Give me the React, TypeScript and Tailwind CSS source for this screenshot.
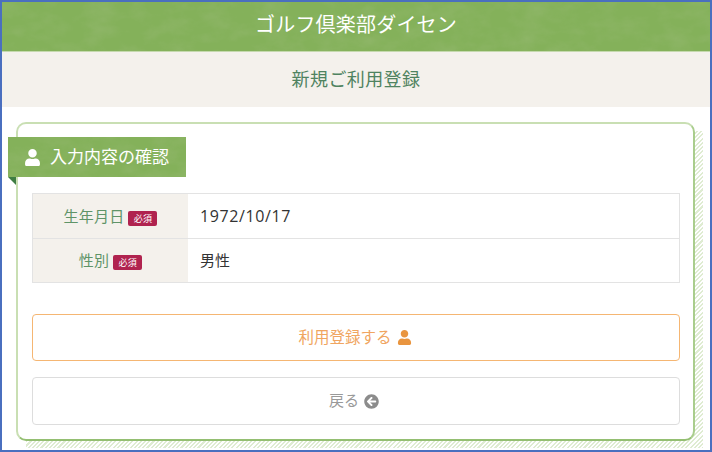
import { FaUser, FaArrowCircleLeft } from "react-icons/fa";

function Texture({ id, seed }: { id: string; seed: number }) {
  return (
    <svg className="absolute inset-0 h-full w-full" aria-hidden="true">
      <filter id={id}>
        <feTurbulence type="fractalNoise" baseFrequency="0.035 0.06" numOctaves={4} seed={seed} />
        <feColorMatrix values="0 0 0 0 0.36  0 0 0 0 0.52  0 0 0 0 0.22  1.6 0 0 0 -0.62" />
      </filter>
      <rect width="100%" height="100%" filter={`url(#${id})`} opacity="0.4" />
    </svg>
  );
}

function Badge() {
  return (
    <span className="mt-[4px] inline-flex h-[15px] w-[29px] items-center justify-center rounded-[2px] bg-[#b0234f] text-[9px] leading-none text-white">
      必須
    </span>
  );
}

function Row({ label, value, last, wide }: { label: string; value: string; last?: boolean; wide?: boolean }) {
  return (
    <div className={`flex ${last ? "h-[43px]" : "h-[45px] border-b border-[#e3e3e3]"}`}>
      <div className="flex w-[155px] items-center justify-center gap-[4px] bg-[#f4f1ec] text-[15px] tracking-[0.2px] text-[#5f9468]">
        <span>{label}</span>
        <Badge />
      </div>
      <div className={`flex flex-1 items-center pl-3 text-[#333333] ${wide ? "text-[16px] tracking-[0.6px]" : "text-[15px]"}`}>
        {value}
      </div>
    </div>
  );
}

export default function App() {
  return (
    <div
      className="flex h-[452px] w-[712px] flex-col overflow-hidden border-2 border-[#4a6fbf] bg-white"
      style={{ fontFamily: '"Open Sans", "Noto Sans CJK JP", sans-serif' }}
    >
      <header className="relative flex h-[50px] shrink-0 items-center justify-center overflow-hidden border-b border-[#c5d9ae] bg-[#84b15a] pb-[3px]">
        <Texture id="tex-a" seed={4} />
        <h1 className="relative text-[20px] font-normal tracking-[0.2px] text-white">ゴルフ倶楽部ダイセン</h1>
      </header>
      <div className="flex h-[55px] shrink-0 items-center justify-center bg-[#f4f1ec] text-[18px] tracking-[0.4px] text-[#4f8360]">
        新規ご利用登録
      </div>

      <main className="relative ml-[14px] mt-[15px] h-[319px] w-[679px]">
        <div className="absolute left-[10px] top-[9px] h-[317px] w-[677px] bg-[repeating-linear-gradient(135deg,#dfecd2_0px,#dfecd2_1.5px,#ffffff_1.5px,#ffffff_3px)]" />
        <section className="relative h-full rounded-[10px] border-2 border-[#c9dfb3] border-b-[#94bf72] border-r-[#a9cd8c] bg-white pl-[14px] pr-[13px]">
          <div className="absolute left-[-10px] top-[13px] z-10">
            <div className="relative flex h-[40px] w-[178px] items-center gap-[9px] overflow-hidden bg-[#84b15a] pl-[16px] text-[17px] text-white">
              <Texture id="tex-b" seed={9} />
              <FaUser className="relative h-[17px] w-[17px] shrink-0" />
              <span className="relative whitespace-nowrap">入力内容の確認</span>
            </div>
            <div className="h-0 w-0 border-l-[8px] border-t-[8px] border-l-transparent border-t-[#3f7d43]" />
          </div>

          <div className="mt-[69px] border border-[#e3e3e3] bg-white">
            <Row label="生年月日" value="1972/10/17" wide />
            <Row label="性別" value="男性" last />
          </div>

          <button className="mt-[31px] flex h-[47px] w-full items-center justify-center gap-[5px] rounded-[4px] border border-[#f5b673] bg-white pr-[2px] text-[15.5px] text-[#f0a560]">
            <span>利用登録する</span>
            <FaUser className="h-[15px] w-[15px] text-[#e9953f]" />
          </button>
          <button className="mt-[16px] flex h-[48px] w-full items-center justify-center gap-[5px] rounded-[4px] border border-[#dddddd] bg-white pb-[2px] pr-[4px] text-[15px] text-[#999999]">
            <span>戻る</span>
            <FaArrowCircleLeft className="mt-[2px] h-[15px] w-[15px] text-[#8c8c8c]" />
          </button>
        </section>
      </main>
    </div>
  );
}
